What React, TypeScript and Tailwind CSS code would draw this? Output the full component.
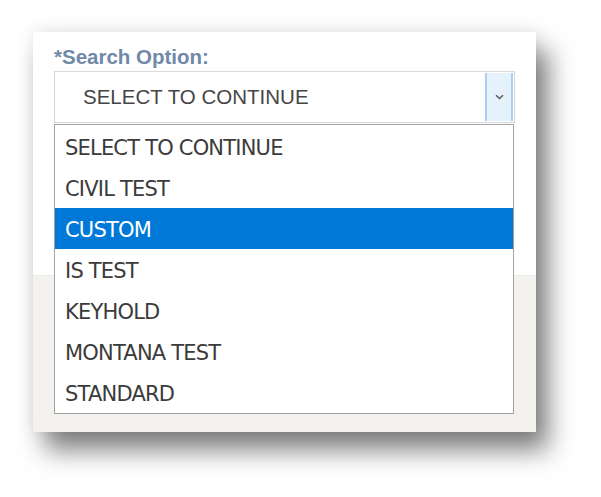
import React from 'react';

const options = [
  'SELECT TO CONTINUE',
  'CIVIL TEST',
  'CUSTOM',
  'IS TEST',
  'KEYHOLD',
  'MONTANA TEST',
  'STANDARD',
];

export default function App() {
  const selected = 'CUSTOM';

  return (
    <div className="w-[601px] h-[497px] bg-white pt-[32px] pl-[33px]">
      {/* Card with the heavy drop shadow */}
      <div className="relative w-[503px] h-[400px] flex flex-col shadow-[0_-2px_16px_rgba(0,0,0,0.08),12px_18px_24px_rgba(0,0,0,0.5)]">
        <div className="h-[243px] bg-white px-[21px] pt-[12px]">
          <label className="block h-[27px] text-[20.5px] leading-[26px] font-bold text-[#7189a8] font-['Liberation_Sans',Arial,sans-serif]">
            *Search Option:
          </label>
          <div className="flex h-[52px] border border-[#d4d4d4] border-t-[#dcdcdc] bg-white">
            <div className="flex-1 flex items-center pl-[28px] text-[20.5px] text-[#454545] font-['Liberation_Sans',Arial,sans-serif]">
              SELECT TO CONTINUE
            </div>
            <div className="w-[28px] my-[1px] mr-[1px] flex items-center justify-center bg-[#e5f1fb] border-x-2 border-[#a9d0f3]">
              <svg width="9" height="6" viewBox="0 0 9 6" fill="none">
                <path d="M1 1.2 L4.5 4.6 L8 1.2" stroke="#555" strokeWidth="1.4" />
              </svg>
            </div>
          </div>
        </div>
        <div className="flex-1 bg-[#f3f2ee] border-t border-[#ebeae6]" />

        {/* Open dropdown list */}
        <ul className="absolute left-[21px] top-[92px] w-[460px] h-[290px] border border-[#a3a3a3] bg-white pt-[1px] font-['DejaVu_Sans',Verdana,sans-serif] text-[21px] tracking-[-0.8px]">
          {options.map((o) => (
            <li
              key={o}
              className={`h-[41px] flex items-center pl-[10px] pt-[4px] ${
                o === selected ? 'bg-[#0078d7] text-white' : 'text-[#3b3b3b]'
              }`}
            >
              {o}
            </li>
          ))}
        </ul>
      </div>
    </div>
  );
}
